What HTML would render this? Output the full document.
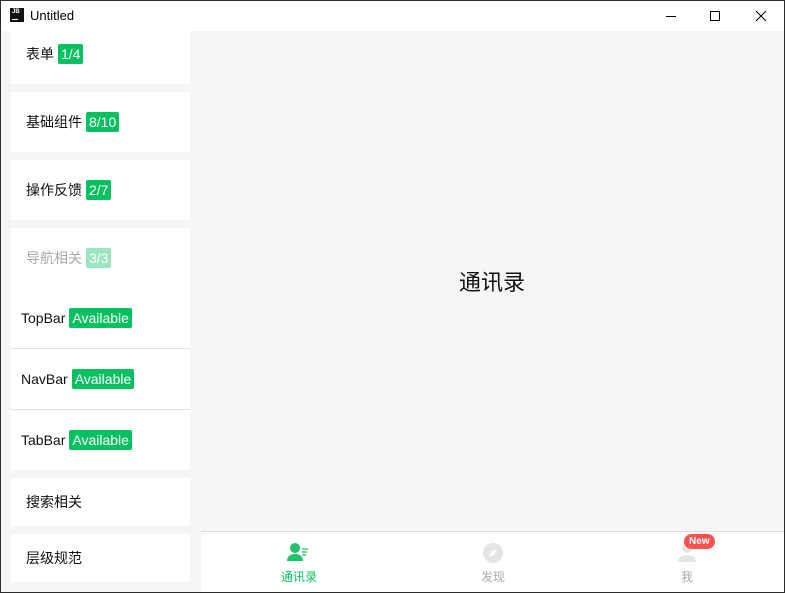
<!DOCTYPE html>
<html><head><meta charset="utf-8"><style>
*{margin:0;padding:0;box-sizing:border-box}
body{width:785px;height:593px;overflow:hidden;background:#fff;font-family:"Liberation Sans","Noto Sans CJK SC",sans-serif;position:relative}
.win{position:absolute;left:0;top:0;width:785px;height:593px;border:1px solid #2b2b2b;border-top:none}
.title{position:absolute;left:0;top:0;width:785px;height:31px;background:#fff;border-top:1px solid #2b2b2b}
.title .t{position:absolute;left:30px;top:7px;font-size:13px;color:#000}
.logo{position:absolute;left:10px;top:7px;width:14px;height:14px;background:#111;color:#fff;font-size:6px;font-weight:bold;line-height:7px;padding-left:2px;padding-top:1px}
.logo i{position:absolute;left:2px;bottom:2px;width:6px;height:1px;background:#fff}
.side{position:absolute;left:1px;top:31px;width:200px;height:561px;background:#f5f5f5}
.card{position:absolute;left:10px;width:179px;background:#fff;font-size:14px;color:#111}
.row{position:absolute;left:15px;display:flex;align-items:center}
.b{display:inline-block;background:#07c160;color:#fff;font-size:14px;height:20px;line-height:20px;padding:0 3px;border-radius:2px;margin-left:4px}
.main{position:absolute;left:190px;top:31px;width:594px;height:500px;background:#f6f6f6}
.tab{position:absolute;left:201px;top:531px;width:583px;height:61px;background:#fff;border-top:1px solid #ddd}
.ti{position:absolute;top:0;width:80px;text-align:center;font-size:12px}
</style></head><body>
<div class="title"><div class="logo">JB<i></i></div><div class="t">Untitled</div>
<svg style="position:absolute;left:660px;top:8px" width="110" height="14">
<line x1="6" y1="7.5" x2="16" y2="7.5" stroke="#000"/>
<rect x="50.5" y="2.5" width="9" height="9" fill="none" stroke="#000"/>
<path d="M96 2L106 12M106 2L96 12" stroke="#000"/></svg></div>
<div class="side">
<div class="card" style="top:0;height:53px"><div class="row" style="top:13px">表单<span class="b">1/4</span></div></div>
<div class="card" style="top:61px;height:60px"><div class="row" style="top:20px">基础组件<span class="b">8/10</span></div></div>
<div class="card" style="top:129px;height:60px"><div class="row" style="top:20px">操作反馈<span class="b">2/7</span></div></div>
<div class="card" style="top:197px;height:242px">
<div class="row" style="top:20px;color:#aaa">导航相关<span class="b" style="background:#9be6c0">3/3</span></div>
<div class="row" style="left:10px;top:80px">TopBar<span class="b">Available</span></div>
<div style="position:absolute;left:0;top:120px;width:179px;height:1px;background:#e3e3e3"></div>
<div class="row" style="left:10px;top:141px">NavBar<span class="b">Available</span></div>
<div style="position:absolute;left:0;top:181px;width:179px;height:1px;background:#e3e3e3"></div>
<div class="row" style="left:10px;top:202px">TabBar<span class="b">Available</span></div>
</div>
<div class="card" style="top:447px;height:48px"><div class="row" style="top:14px">搜索相关</div></div>
<div class="card" style="top:503px;height:48px"><div class="row" style="top:14px">层级规范</div></div>
</div>
<div class="main"><div style="position:absolute;left:0;width:604px;top:234px;text-align:center;font-size:22px;color:#111">通讯录</div></div>
<div class="tab">
<div class="ti" style="left:58px;color:#07c160">
<svg width="26" height="22" style="margin-top:10px;display:block;margin-left:27px" viewBox="0 0 26 22"><circle cx="9" cy="6" r="5" fill="#20c467"/><path d="M1 19c0-5 4-7 8-7s8 2 8 7z" fill="#20c467"/><path d="M16 7h6M16 10h5M16 13h4" stroke="#20c467" stroke-width="1.3"/></svg>
<div style="margin-top:4px">通讯录</div></div>
<div class="ti" style="left:252px;color:#aaa">
<svg width="22" height="22" style="margin-top:10px;display:block;margin-left:29px"><circle cx="11" cy="11" r="10" fill="#e5e5e5"/><path d="M15 7l-3 6-5 2 3-6z" fill="#fff"/></svg>
<div style="margin-top:4px">发现</div></div>
<div class="ti" style="left:446px;color:#aaa">
<svg width="22" height="22" style="margin-top:10px;display:block;margin-left:29px"><circle cx="11" cy="6" r="5" fill="#e5e5e5"/><path d="M2 20c0-5 4-7 9-7s9 2 9 7z" fill="#e5e5e5"/></svg>
<div style="margin-top:4px">我</div>
<div style="position:absolute;left:37px;top:2px;background:#fa5151;color:#fff;font-size:10px;font-weight:bold;height:15px;line-height:15px;padding:0 5px;border-radius:8px">New</div></div>
</div>
<div class="win"></div>
</body></html>
